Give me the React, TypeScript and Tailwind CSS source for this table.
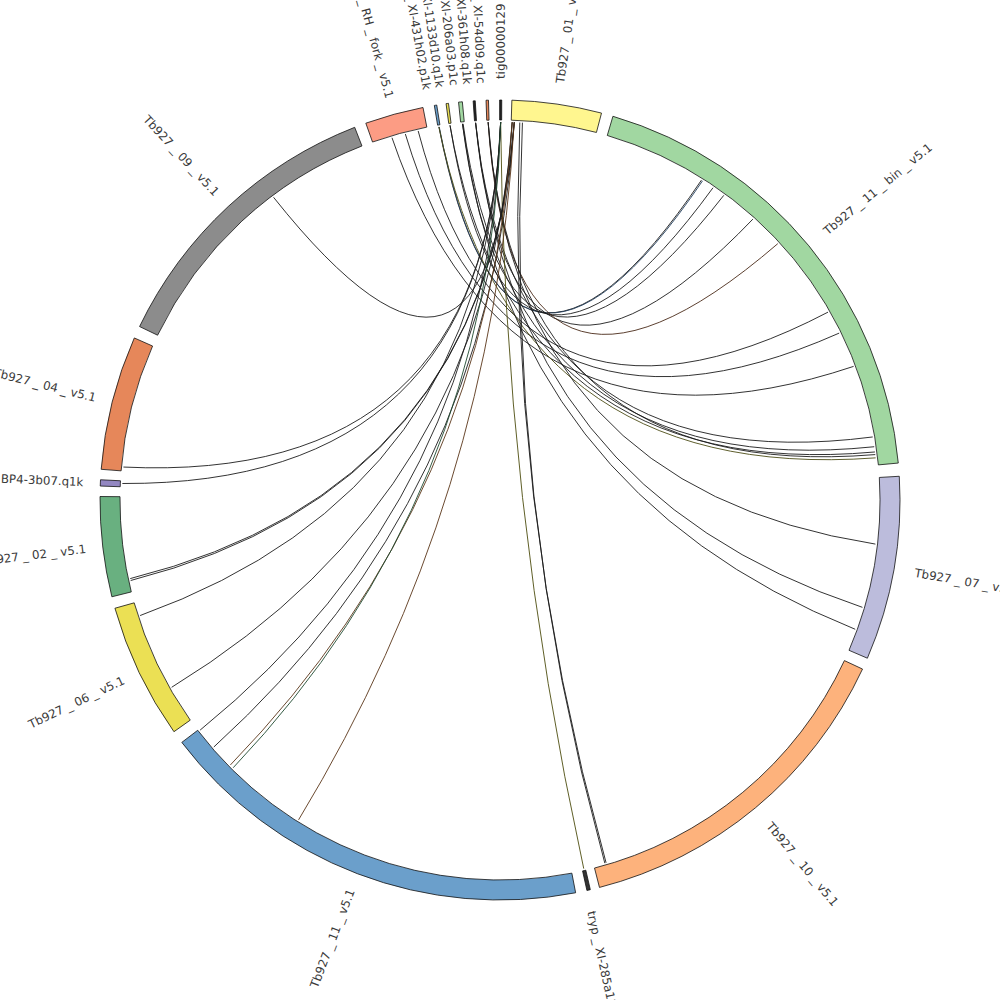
import React from 'react';

const CX = 500;
const CY = 500;
const R_IN = 380;
const R_OUT = 400;
const R_LINK = 378;

type Segment = {
  name: string;
  a0: number;
  a1: number;
  fill: string;
  label?: number;
};

type Link = [number, number, string?];

const segments: Segment[] = [
  { name: 'Tb927_01_v5.1', a0: 1.7, a1: 14.7, fill: '#fff68f' },
  { name: 'Tb927_11_bin_v5.1', a0: 16.4, a1: 84.7, fill: '#a1d7a1' },
  { name: 'Tb927_07_v5.1', a0: 86.6, a1: 113.3, fill: '#bcbcdc' },
  { name: 'Tb927_10_v5.1', a0: 115.0, a1: 165.6, fill: '#fdb27c' },
  { name: 'tryp_XI-285a12.q1k', a0: 166.95, a1: 167.45, fill: '#333333', label: 167.5 },
  { name: 'Tb927_11_v5.1', a0: 169.1, a1: 232.7, fill: '#6b9fcb' },
  { name: 'Tb927_06_v5.1', a0: 234.6, a1: 254.3, fill: '#ebe054' },
  { name: 'Tb927_02_v5.1', a0: 256.0, a1: 270.5, fill: '#69b080' },
  { name: 'tryp_BP4-3b07.q1k', a0: 272.0, a1: 272.9, fill: '#9387c2' },
  { name: 'Tb927_04_v5.1', a0: 274.4, a1: 293.9, fill: '#e6875a' },
  { name: 'Tb927_09_v5.1', a0: 295.7, a1: 338.7, fill: '#8c8c8c' },
  { name: 'Tb927_RH_fork_v5.1', a0: 340.4, a1: 348.9, fill: '#fc9c84' },
  { name: 'tryp_XI-431h02.p1k', a0: 350.55, a1: 350.9, fill: '#6b9fcb', label: 349.9 },
  { name: 'tryp_XI-1133d10.q1k', a0: 352.25, a1: 352.6, fill: '#ebe054', label: 351.7 },
  { name: 'tryp_XI-206a03.p1c', a0: 354.05, a1: 354.6, fill: '#a1d7a1', label: 353.7 },
  { name: 'tryp_XI-361h08.q1k', a0: 356.15, a1: 356.45, fill: '#222222', label: 355.5 },
  { name: 'tryp_XI-54d09.q1c', a0: 358.0, a1: 358.35, fill: '#e6875a', label: 357.4 },
  { name: 'tig00000129', a0: -0.05, a1: 0.25, fill: '#222222', label: 0.1 },
];

const links: Link[] = [
  // top-left contigs to the right half
  [350.7, 32.2],
  [350.75, 32.4, '#24405e'],
  [352.4, 34.3],
  [354.3, 36.3],
  [356.3, 42.0],
  [358.2, 47.3, '#4a2a18'],
  [347.5, 60.2],
  [345.5, 63.8],
  [343.4, 69.3],
  [356.3, 80.4],
  [354.4, 81.9],
  [352.4, 82.7],
  [358.2, 83.1],
  [350.7, 83.6, '#4d4d16'],
  [358.2, 96.7],
  [356.3, 106.5],
  [354.3, 110.0],
  // long ones down to the bottom
  [3.0, 163.7],
  [3.4, 163.9],
  [0.1, 167.2, '#4d4d0f'],
  // top-right contigs to the left half
  [1.85, 323.2],
  [0.1, 275.0],
  [0.1, 272.5],
  [2.15, 258.0],
  [2.2, 257.7],
  [0.1, 252.2],
  [1.85, 240.3],
  [0.1, 232.5],
  [2.15, 229.2],
  [1.85, 225.5, '#5a3518'],
  [0.1, 224.9, '#1f4a30'],
  [2.15, 212.2, '#5a3518'],
];

function pt(r: number, a: number): [number, number] {
  const t = (a * Math.PI) / 180;
  return [CX + r * Math.sin(t), CY - r * Math.cos(t)];
}

function bandPath(a0: number, a1: number) {
  const large = a1 - a0 > 180 ? 1 : 0;
  const [x1, y1] = pt(R_OUT, a0);
  const [x2, y2] = pt(R_OUT, a1);
  const [x3, y3] = pt(R_IN, a1);
  const [x4, y4] = pt(R_IN, a0);
  return `M${x1} ${y1} A${R_OUT} ${R_OUT} 0 ${large} 1 ${x2} ${y2} L${x3} ${y3} A${R_IN} ${R_IN} 0 ${large} 0 ${x4} ${y4} Z`;
}

function linkPath(a: number, b: number) {
  const [x1, y1] = pt(R_LINK, a);
  const [x2, y2] = pt(R_LINK, b);
  const d = ((((b - a) % 360) + 540) % 360) - 180;
  const span = Math.abs(d);
  const rc = 40 * (1 - span / 180);
  const [cx, cy] = pt(rc, a + d / 2);
  return `M${x1} ${y1} Q${cx} ${cy} ${x2} ${y2}`;
}

function Label({ seg }: { seg: Segment }) {
  const a = seg.label ?? (seg.a0 + seg.a1) / 2;
  const n = ((a % 360) + 360) % 360;
  const right = n < 180;
  // labels on the left read towards the circle and end a little closer to it
  const [x, y] = pt(right ? 421 : 417, n);
  const rot = right ? n - 90 : n - 270;
  return (
    <text
      x={0}
      y={0}
      transform={`translate(${x} ${y}) rotate(${rot})`}
      textAnchor={right ? 'start' : 'end'}
      dominantBaseline="central"
      fontSize={11.8}
      fill="#3a3a3a"
      style={{ fontFamily: '"DejaVu Sans", sans-serif' }}
    >
      {seg.name.split('_').join(' _ ')}
    </text>
  );
}

export default function App() {
  return (
    <div className="w-[1000px] h-[1000px] bg-white overflow-hidden">
      <svg width={1000} height={1000} viewBox="0 0 1000 1000" className="block">
        <g fill="none" strokeWidth={0.9}>
          {links.map(([a, b, c], i) => (
            <path key={i} d={linkPath(a, b)} stroke={c ?? '#1c1c1c'} />
          ))}
        </g>
        {segments.map((s) => (
          <path key={s.name} d={bandPath(s.a0, s.a1)} fill={s.fill} stroke="#111" strokeWidth={0.8} />
        ))}
        {segments.map((s) => (
          <Label key={s.name} seg={s} />
        ))}
      </svg>
    </div>
  );
}
